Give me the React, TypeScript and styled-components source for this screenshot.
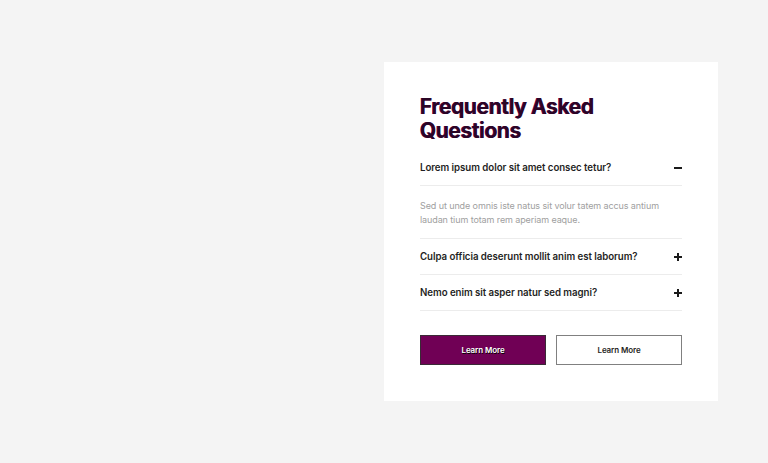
import React, { useState } from "react";
import styled, { createGlobalStyle } from "styled-components";

const Global = createGlobalStyle`
  html, body { margin: 0; padding: 0; background: #f4f4f4; }
  body { font-family: "Inter", "Noto Sans", sans-serif; }
  * { box-sizing: border-box; }
`;

const Page = styled.div`
  width: 768px;
  height: 463px;
  display: flex;
  justify-content: flex-end;
  align-items: flex-start;
  padding: 62px 50px 0 0;
`;

const Card = styled.div`
  width: 334px;
  height: 339px;
  background: #ffffff;
  padding: 33px 36px 0 36px;
  display: flex;
  flex-direction: column;
`;

const Title = styled.h2`
  margin: 0 0 7px 0;
  font-family: "Inter", sans-serif;
  font-weight: 700;
  font-size: 21px;
  line-height: 24px;
  letter-spacing: -0.4px;
  color: #2a0626;
  text-shadow: -0.6px 0 #7a005c;
`;

const List = styled.div`
  display: flex;
  flex-direction: column;
`;

const Item = styled.div`
  border-bottom: 1px solid #ececec;
`;

const Question = styled.button`
  all: unset;
  width: 100%;
  height: 35px;
  display: flex;
  align-items: center;
  justify-content: space-between;
  cursor: pointer;
  font-family: "Inter", sans-serif;
  font-weight: 600;
  font-size: 9.7px;
  letter-spacing: -0.05px;
  color: #1f1f24;
`;

const Sign = styled.span<{ open: boolean }>`
  width: 8px;
  height: 8px;
  position: relative;
  &::before, &::after {
    content: "";
    position: absolute;
    background: #1a1a1a;
  }
  &::before { left: 0; right: 0; top: 3px; height: 2px; }
  &::after {
    display: ${(p) => (p.open ? "none" : "block")};
    top: 0; bottom: 0; left: 3px; width: 2px;
  }
`;

const Answer = styled.p`
  margin: 0;
  border-top: 1px solid #ececec;
  padding: 13px 0 11px 0;
  font-size: 9px;
  line-height: 14px;
  color: #a0a0a0;
  letter-spacing: -0.1px;
`;

const Buttons = styled.div`
  display: grid;
  grid-template-columns: 1fr 1fr;
  gap: 10px;
  margin-top: 24px;
`;

const Btn = styled.button<{ primary?: boolean }>`
  height: 30px;
  font-family: "Inter", sans-serif;
  font-weight: 600;
  font-size: 8px;
  letter-spacing: -0.1px;
  cursor: pointer;
  background: ${(p) => (p.primary ? "#700055" : "#ffffff")};
  color: ${(p) => (p.primary ? "#ffffff" : "#1f1f24")};
  border: 1px solid ${(p) => (p.primary ? "#3a2a36" : "#808080")};
  text-shadow: ${(p) => (p.primary ? "0.5px 0.5px 0 #000" : "none")};
`;

const answer =
  "Sed ut unde omnis iste natus sit volur tatem accus antium laudan tium totam rem aperiam eaque.";

const faqs = [
  { q: "Lorem ipsum dolor sit amet consec tetur?", a: answer },
  { q: "Culpa officia deserunt mollit anim est laborum?", a: answer },
  { q: "Nemo enim sit asper natur sed magni?", a: answer },
];

export default function App() {
  const [open, setOpen] = useState(0);
  return (
    <>
      <Global />
      <Page>
        <Card>
          <Title>
            Frequently Asked
            <br />
            Questions
          </Title>
          <List>
            {faqs.map((f, i) => (
              <Item key={i}>
                <Question onClick={() => setOpen(open === i ? -1 : i)}>
                  <span>{f.q}</span>
                  <Sign open={open === i} />
                </Question>
                {open === i && <Answer>{f.a}</Answer>}
              </Item>
            ))}
          </List>
          <Buttons>
            <Btn primary>Learn More</Btn>
            <Btn>Learn More</Btn>
          </Buttons>
        </Card>
      </Page>
    </>
  );
}
